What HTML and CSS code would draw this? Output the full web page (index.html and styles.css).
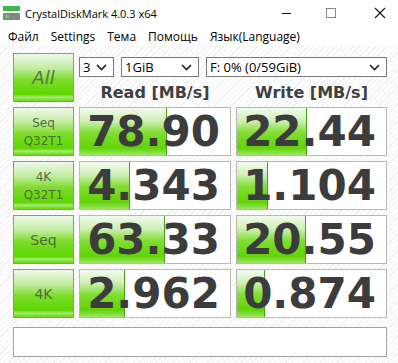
FILE: index.html
```html
<!DOCTYPE html>
<html lang="ru">
  <head>
    <meta charset="UTF-8" />
    <title>CrystalDiskMark 4.0.3 x64</title>
    <link rel="stylesheet" href="styles.css">
  </head>
  <body>
    <div class="window">
      <!-- Title bar -->
      <div class="titlebar">
        <svg class="app-icon" width="18" height="16" viewBox="0 0 18 16">
          <rect x="0" y="1" width="17" height="5" fill="#3fb54a" />
          <rect x="0" y="8" width="17" height="7" rx="1" fill="#7d8a80" />
          <rect x="2" y="10" width="4" height="3" fill="#5fd06a" />
        </svg>
        <span class="title">CrystalDiskMark 4.0.3 x64</span>
        <div class="controls">
          <svg width="46" height="26" viewBox="0 0 46 26"><line x1="22" y1="13.5" x2="31" y2="13.5" stroke="#111" /></svg>
          <svg width="46" height="26" viewBox="0 0 46 26"><rect x="20.5" y="8.5" width="9" height="9" fill="none" stroke="#888" /></svg>
          <svg width="46" height="26" viewBox="0 0 46 26"><path d="M23 8 L33 18 M33 8 L23 18" stroke="#111" stroke-width="1.1" /></svg>
        </div>
      </div>

      <!-- Menu -->
      <div class="menu">
        <span>Файл</span>
        <span>Settings</span>
        <span>Тема</span>
        <span>Помощь</span>
        <span>Язык(Language)</span>
      </div>

      <!-- Main area -->
      <div class="main">
        <div class="grid">
          <div class="btn btn-all">All</div>
          <div class="top-right">
            <div class="selects">
              <div class="select sel-count">3<svg width="11" height="7" viewBox="0 0 11 7"><path d="M1 1 L5.5 5.5 L10 1" fill="none" stroke="#222" stroke-width="1.6" /></svg></div>
              <div class="select sel-size">1GiB<svg width="11" height="7" viewBox="0 0 11 7"><path d="M1 1 L5.5 5.5 L10 1" fill="none" stroke="#222" stroke-width="1.6" /></svg></div>
              <div class="select sel-drive">F: 0% (0/59GiB)<svg width="11" height="7" viewBox="0 0 11 7"><path d="M1 1 L5.5 5.5 L10 1" fill="none" stroke="#222" stroke-width="1.6" /></svg></div>
            </div>
            <div class="headers">
              <div class="head">Read [MB/s]</div>
              <div class="head">Write [MB/s]</div>
            </div>
          </div>

          <div class="btn">Seq<br>Q32T1</div>
          <div class="result"><div class="fill" style="width: 86px"></div><span>78.90</span></div>
          <div class="result"><div class="fill" style="width: 69px"></div><span>22.44</span></div>

          <div class="btn">4K<br>Q32T1</div>
          <div class="result"><div class="fill" style="width: 49px"></div><span>4.343</span></div>
          <div class="result"><div class="fill" style="width: 30px"></div><span>1.104</span></div>

          <div class="btn btn-single">Seq</div>
          <div class="result"><div class="fill" style="width: 84px"></div><span>63.33</span></div>
          <div class="result"><div class="fill" style="width: 68px"></div><span>20.55</span></div>

          <div class="btn btn-single">4K</div>
          <div class="result"><div class="fill" style="width: 44px"></div><span>2.962</span></div>
          <div class="result"><div class="fill" style="width: 27px"></div><span>0.874</span></div>
        </div>

        <div class="comment"></div>
      </div>
    </div>
  </body>
</html>
```

FILE: styles.css
```css
/* General */
body {
  margin: 0;
  width: 398px;
  height: 363px;
  overflow: hidden;
  font-family: "Open Sans", "Noto Sans", sans-serif;
  color: #000;
}

.window {
  width: 398px;
  height: 363px;
  background: #fff;
}

/* Title bar */
.titlebar {
  height: 26px;
  display: flex;
  align-items: center;
  background: #fff;
}

.app-icon {
  margin-left: 3px;
  margin-right: 4px;
}

.title {
  font-size: 11px;
}

.controls {
  margin-left: auto;
  display: flex;
}

/* Menu */
.menu {
  height: 20px;
  display: flex;
  align-items: center;
  font-size: 12px;
  padding-left: 2px;
}

.menu span {
  padding: 0 6px;
}

/* Main area */
.main {
  height: 317px;
  box-sizing: border-box;
  padding: 7px 11px 0 13px;
  background: repeating-linear-gradient(-45deg, #fdfdfd 0 3px, #f1f1f1 3px 4px);
}

.grid {
  display: grid;
  grid-template-columns: 61px 152px 151px;
  grid-auto-rows: 49px;
  column-gap: 5px;
  row-gap: 5px;
}

.top-right {
  grid-column: 2 / 4;
  display: flex;
  flex-direction: column;
  padding-top: 4px;
}

.selects {
  display: flex;
  gap: 7px;
  height: 20px;
}

.select {
  box-sizing: border-box;
  height: 20px;
  border: 1px solid #7a7a7a;
  background: #fff;
  font-size: 13px;
  display: flex;
  align-items: center;
  justify-content: space-between;
  padding: 0 6px 0 3px;
}

.sel-count { width: 35px; }
.sel-size { width: 78px; }
.sel-drive { width: 181px; }

.headers {
  display: grid;
  grid-template-columns: 152px 151px;
  column-gap: 5px;
  margin-top: 6px;
}

.head {
  text-align: center;
  font-family: "DejaVu Sans", sans-serif;
  font-weight: bold;
  font-size: 16px;
  color: #404040;
}

/* Buttons */
.btn {
  box-sizing: border-box;
  border: 1px solid #8c9a88;
  background: linear-gradient(to bottom, #eef8e8 0%, #c4eca2 30%, #7cdc2a 55%, #5ed600 86%, #a6e87a 92%, #66d80c 100%);
  display: flex;
  align-items: center;
  justify-content: center;
  text-align: center;
  font-family: "DejaVu Sans", sans-serif;
  font-size: 12px;
  line-height: 18px;
  color: #4f6d3c;
}

.btn-all {
  font-size: 18px;
  font-style: italic;
  color: #557545;
}

.btn-single {
  font-size: 14px;
}

/* Result boxes */
.result {
  position: relative;
  box-sizing: border-box;
  border: 1px solid #b8b8b8;
  background: #fff;
  display: flex;
  align-items: center;
  justify-content: flex-end;
  padding-right: 10px;
  overflow: hidden;
}

.fill {
  position: absolute;
  left: 0;
  top: 0;
  bottom: 0;
  border-right: 1px solid #4c9e1e;
  background: linear-gradient(to bottom, #f4fbf0 0%, #cdefb3 28%, #82de34 52%, #60d404 85%, #9ee46a 100%);
}

.result span {
  position: relative;
  font-family: "DejaVu Sans", sans-serif;
  font-weight: bold;
  font-size: 42px;
  color: #3c3c3c;
  line-height: 1;
}

/* Comment box */
.comment {
  box-sizing: border-box;
  margin-top: 9px;
  width: 374px;
  height: 30px;
  border: 1px solid #a0a0a0;
  background: #fff;
}
```
